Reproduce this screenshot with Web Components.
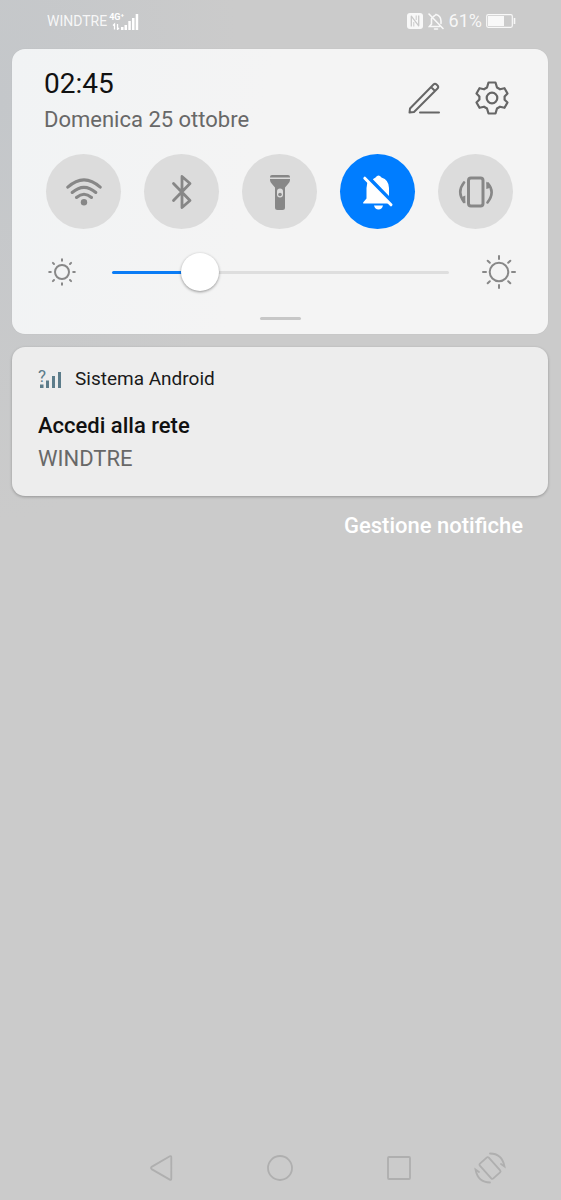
<!DOCTYPE html>
<html lang="it">
<head>
<meta charset="utf-8">
<meta name="viewport" content="width=device-width, initial-scale=1">
<title>Pannello notifiche</title>
<style>
  html { height: 100%; }
  body {
    margin: 0;
    min-height: 100%;
    display: flex;
    font-family: Roboto, "Noto Sans", sans-serif;
    background: radial-gradient(ellipse 240px 420px at 0 100px, #c4c7ca, #cbcbcb);
  }
</style>
</head>
<body>
<phone-shade></phone-shade>
<script>
const ICONS = {
  wifi: ['38 30', '<g fill="none" stroke="currentColor" stroke-width="3" stroke-linecap="round"><path d="M2.800 10.200Q19-4.500 35.200 10.200M7.200 15.500Q19 5.200 30.800 15.500M11.500 20.500Q19 14 26.500 20.500"/></g><circle cx="19" cy="25.300" r="3.200" fill="currentColor"/>'],
  bluetooth: ['24 36', '<path d="M3.500 9.500L20 26.500 12 33.500V2.500L20 9.500 3.500 26.500" fill="none" stroke="currentColor" stroke-width="2.800" stroke-linecap="round" stroke-linejoin="round"/>'],
  torch: ['22 36', '<path d="M1 3a2 2 0 012-2h16a2 2 0 012 2v.500H1zM1 5h20v1q0 2-2 4l-3 3.500V33.500a2.500 2.500 0 01-2.500 2.500h-5A2.500 2.500 0 016 33.500V13.500L3 10Q1 8 1 6z" fill="currentColor"/><rect x="8" y="14.500" width="6" height="9" rx="3" fill="#dcdcdc"/><circle cx="11" cy="20.500" r="1.800" fill="currentColor"/>'],
  belloff: ['32 36', '<g fill="currentColor"><path d="M10.800 5.300Q12.500 4 13.500 3.500 16.500-.500 19.500 3.500 27 6 27 14V22zM5.500 7.500L27.500 29.500H2q-1.500 0-.500-1.500L4.500 24.500V14zM12 31.500h9q-1 4-4.500 4T12 31.500z"/></g><path d="M2.800 4.200L29 30.800" stroke="currentColor" stroke-width="3" stroke-linecap="round"/>'],
  rotate: ['36 34', '<g fill="none" stroke="currentColor" stroke-width="3"><rect x="10.500" y="3" width="14.500" height="28" rx="2.500"/><path d="M6 7.500Q-1.500 17 6 27" stroke-linecap="round" stroke-width="2.600"/><path d="M29.500 27.500Q37.500 17 30 8.500" stroke-linecap="round" stroke-width="2.600"/></g><path d="M7.300 20.500V28.500L2.500 22.500zM28.300 6.500V14L33.500 12.500z" fill="currentColor"/>'],
  pencil: ['34 34', '<g fill="none" stroke="currentColor" stroke-width="2" stroke-linecap="round" stroke-linejoin="round"><path d="M2.500 31.500L3 27.500 26.500 3.500Q28 2 29.500 3.500L30.500 4.500Q32 6 30.500 7.500L7 31 2.500 31.500M24 6L28 10M13 31.500H32"/></g>'],
  gear: ['34 34', '<g fill="none" stroke="currentColor" stroke-width="2.200" stroke-linejoin="round"><path d="M13.500 1.500H20.500L22 6.500 25 8.300 29.500 7.200 32.500 12.500 29.600 15.500V18.800L32.500 21.500 29.500 26.800 25 25.700 22 27.500 20.500 32.500H13.500L12 27.500 9 25.700 4.500 26.800 1.500 21.500 4.400 18.500V15.500L1.500 12.500 4.500 7.200 9 8.300 12 6.500z"/><circle cx="17" cy="17" r="5.300"/></g>'],
  sunsmall: ['28 28', '<g fill="none" stroke="currentColor" stroke-width="2" stroke-linecap="round"><circle cx="14" cy="14" r="7"/><path d="M14 1.200V2.800M14 25.200V26.800M1.200 14H2.800M25.200 14H26.800M4.900 4.900L6 6M22 22L23.100 23.100M4.900 23.100L6 22M22 6L23.100 4.900"/></g>'],
  sunlarge: ['34 34', '<g fill="none" stroke="currentColor" stroke-width="2" stroke-linecap="round"><circle cx="17" cy="17" r="9.300"/><path d="M17 1V4M17 30V33M1 17H4M30 17H33M5.700 5.700L7.800 7.800M26.200 26.200L28.300 28.300M5.700 28.300L7.800 26.200M26.200 7.800L28.300 5.700"/></g>'],
  nfc: ['16 16', '<rect width="16" height="16" rx="3" fill="currentColor"/><path d="M4.300 13.500V3.200L11.700 12.800V2.500" fill="none" stroke="#c9c9c9" stroke-width="1.300" stroke-linejoin="round"/><path d="M6.800 13.500V9M9.200 2.500V7" stroke="#c9c9c9"/>'],
  mute: ['16 17', '<g fill="none" stroke="currentColor" stroke-width="1.600" stroke-linecap="round"><path d="M1 1L15 15.500M5.500 3.500Q7 2.500 8 1.500 13 3 13 8V10.500M3.500 5.500V11L1.500 13.500H11.500M6.500 16H9.500"/></g>'],
  battery: ['30 14', '<rect x=".700" y=".700" width="25.600" height="12.600" rx="1.500" fill="none" stroke="currentColor" stroke-width="1.200"/><rect x="2" y="2" width="16" height="10" fill="currentColor"/><path d="M28.500 4V10" stroke="currentColor" stroke-width="1.600"/>'],
  bars: ['30 17', '<path d="M12 14h2.500v3H12zM15.500 12H18v5h-2.500zM19.300 8h2.500v9h-2.500zM23 5h2.500v12H23zM26.700 1h2.500v16h-2.500z" fill="currentColor"/><path d="M5.500 16.500V11L4 12.500M8.500 11V16.500L10 15" fill="none" stroke="currentColor" stroke-width="1.300"/>'],
  unknownbars: ['24 20', '<path d="M2 15.500h3.500V19H2zM8 11.500h3V19H8zM14 7h3V19h-3zM20 3h3V19h-3z" fill="currentColor"/>'],
  back: ['24 28', '<path d="M3 12.600L20.800 2.300Q22.300 1.600 22.300 3.500V24.500Q22.300 26.400 20.800 25.600L3 15.400Q1 14 3 12.600z" fill="none" stroke="currentColor" stroke-width="1.800"/>'],
  home: ['28 28', '<circle cx="14" cy="14" r="12" fill="none" stroke="currentColor" stroke-width="1.800"/>'],
  recent: ['26 26', '<rect x="2" y="2" width="22" height="22" rx="1" fill="none" stroke="currentColor" stroke-width="1.800"/>'],
  turn: ['32 32', '<g fill="none" stroke="currentColor" stroke-width="1.800" stroke-linecap="round"><rect x="10" y="6" width="12" height="20" rx="1.500" transform="rotate(-42 16 16)"/><path d="M16 1.500Q28 1.500 30.500 14.500L27 12M16 30.500Q4 30.500 1.500 17.500L5 20"/></g>']
};

class ShadeIcon extends HTMLElement {
  connectedCallback() {
    const [size, art] = ICONS[this.getAttribute('name')];
    const [w, h] = size.split(' ');
    this.attachShadow({ mode: 'open' }).innerHTML = `
      <style>:host { display: block; flex: none } svg { display: block }</style>
      <svg width="${w}" height="${h}" viewBox="0 0 ${w} ${h}" aria-hidden="true">${art}</svg>`;
  }
}
customElements.define('shade-icon', ShadeIcon);

function define(name, html) {
  const template = document.createElement('template');
  template.innerHTML = html;
  customElements.define(name, class extends HTMLElement {
    connectedCallback() {
      if (!this.shadowRoot) this.attachShadow({ mode: 'open' }).append(template.content.cloneNode(true));
    }
  });
}

define('status-bar', `
  <style>
    :host { display: flex; justify-content: space-between; align-items: center; height: 42px; padding: 0 45px 0 47px; color: #fffd; font-size: 14px; line-height: 20px }
    div { display: flex; align-items: center }
    .signal { position: relative; margin-left: 2px; color: #fff }
    .signal span { position: absolute; left: 0; top: 0; font-size: 9px; line-height: 9px; font-weight: 700 }
    .right { gap: 5px }
    .level { display: flex; gap: 4px; font-size: 18px }
  </style>
  <div>WINDTRE<div class="signal"><shade-icon name="bars"></shade-icon><span>4G⁺</span></div></div>
  <div class="right"><shade-icon name="nfc"></shade-icon><shade-icon name="mute"></shade-icon><div class="level">61%<shade-icon name="battery"></shade-icon></div></div>
`);

customElements.define('icon-button', class extends HTMLElement {
  connectedCallback() {
    this.attachShadow({ mode: 'open' }).innerHTML = `
      <style>
        :host { display: block; flex: none }
        button { display: flex; align-items: center; justify-content: center; padding: 0; border: 0; background: none; color: inherit }
      </style>
      <button type="button" aria-label="${this.getAttribute('label')}"><shade-icon name="${this.getAttribute('icon')}"></shade-icon></button>`;
  }
});

customElements.define('quick-toggle', class extends HTMLElement {
  connectedCallback() {
    this.attachShadow({ mode: 'open' }).innerHTML = `
      <style>
        :host { display: block; flex: none }
        button { display: flex; align-items: center; justify-content: center; width: 75px; height: 75px; padding: 0; border: 0; border-radius: 50%; background: #dcdcdc; color: #878787 }
        button[aria-pressed=true] { background: #007dff; color: #fff }
      </style>
      <button type="button" aria-label="${this.getAttribute('label')}" aria-pressed="${this.hasAttribute('on')}"><shade-icon name="${this.getAttribute('icon')}"></shade-icon></button>`;
  }
});

define('brightness-slider', `
  <style>
    :host { display: flex; align-items: center; color: #888; padding: 0 32px 0 36px }
    input { flex: 1; min-width: 0; height: 38px; margin: 0 33px 0 36px; appearance: none; -webkit-appearance: none; background: none }
    input::-webkit-slider-runnable-track { height: 3px; border-radius: 2px; background: linear-gradient(90deg, #0a7cf5 26%, #dedede 26%) }
    input::-webkit-slider-thumb { -webkit-appearance: none; width: 38px; height: 38px; margin-top: -18px; border-radius: 50%; background: #fff; box-shadow: 0 1px 3px #0006 }
  </style>
  <shade-icon name="sunsmall"></shade-icon>
  <input type="range" min="0" max="100" value="23" aria-label="Luminosità">
  <shade-icon name="sunlarge"></shade-icon>
`);

define('quick-panel', `
  <style>
    :host { display: block; border-radius: 13px; background: linear-gradient(100deg, #f1f3f4 0, #f4f4f4 45%); padding: 17px 0 14px; box-shadow: 0 0 1px #0002 }
    header { display: flex; align-items: flex-start; padding: 0 39px 0 32px; color: #666 }
    .when { flex: 1 }
    time { display: block; font-size: 28px; line-height: 36px; color: #111 }
    .date { font-size: 22px; line-height: 36px; color: #686868 }
    .actions { display: flex; gap: 34px; padding-top: 15px }
    .toggles { display: flex; justify-content: space-between; padding: 0 35px 0 34px; margin: 16px 0 24px }
    .grip { width: 41px; height: 3px; border-radius: 2px; background: #c7c7c7; margin: 26px auto 0 }
  </style>
  <header>
    <div class="when"><time datetime="02:45">02:45</time><div class="date">Domenica 25 ottobre</div></div>
    <div class="actions"><icon-button icon="pencil" label="Modifica"></icon-button><icon-button icon="gear" label="Impostazioni"></icon-button></div>
  </header>
  <div class="toggles">
    <quick-toggle icon="wifi" label="Wi-Fi"></quick-toggle>
    <quick-toggle icon="bluetooth" label="Bluetooth"></quick-toggle>
    <quick-toggle icon="torch" label="Torcia"></quick-toggle>
    <quick-toggle icon="belloff" label="Silenzioso" on></quick-toggle>
    <quick-toggle icon="rotate" label="Rotazione automatica"></quick-toggle>
  </div>
  <brightness-slider></brightness-slider>
  <div class="grip"></div>
`);

define('notification-card', `
  <style>
    :host { display: block; border-radius: 13px; background: #ededed; padding: 18px 26px 21px; box-shadow: 0 1px 3px #0004 }
    .app { display: flex; align-items: center; gap: 13px; font-size: 19px; line-height: 28px; color: #1a1a1a; margin-bottom: 17px }
    .badge { position: relative; color: #5c7c8a }
    .badge span { position: absolute; left: 0; top: -1px; font-size: 17px; line-height: 17px }
    h2 { margin: 0; font-size: 22px; line-height: 32px; font-weight: 500; color: #111 }
    p { margin: 0; font-size: 22px; line-height: 33px; color: #686868 }
  </style>
  <div class="app"><div class="badge"><shade-icon name="unknownbars"></shade-icon><span>?</span></div><slot name="app"></slot></div>
  <h2><slot name="title"></slot></h2>
  <p><slot></slot></p>
`);

define('nav-bar', `
  <style>
    :host { display: grid; grid-template-columns: 101fr 119fr 119fr 119fr 63fr 40fr; align-items: center; height: 64px; color: #afafaf }
    icon-button { justify-self: center }
    icon-button[icon=back] { grid-column: 2 }
  </style>
  <icon-button icon="back" label="Indietro"></icon-button>
  <icon-button icon="home" label="Home"></icon-button>
  <icon-button icon="recent" label="Recenti"></icon-button>
  <icon-button icon="turn" label="Ruota schermo"></icon-button>
`);

define('phone-shade', `
  <style>
    :host { display: flex; flex-direction: column; flex: 1; min-width: 0; min-height: 100vh }
    main { flex: 1; display: flex; flex-direction: column; gap: 13px; padding: 7px 13px 0 12px }
    .manage { align-self: flex-end; margin-right: 25px; padding: 0; border: 0; background: none; font: 500 22px/33px Roboto, sans-serif; color: #fff }
  </style>
  <status-bar></status-bar>
  <main>
    <quick-panel></quick-panel>
    <notification-card><span slot="app">Sistema Android</span><span slot="title">Accedi alla rete</span>WINDTRE</notification-card>
    <button class="manage" type="button">Gestione notifiche</button>
  </main>
  <nav-bar></nav-bar>
`);
</script>
</body>
</html>
